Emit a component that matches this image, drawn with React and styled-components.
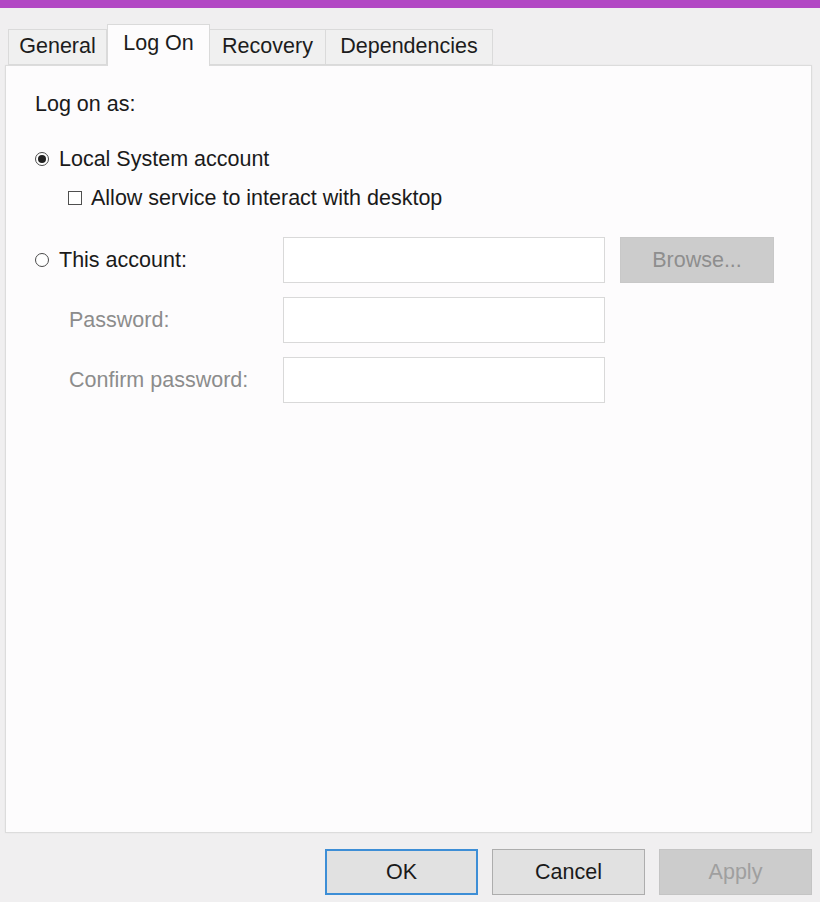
import React, { useState } from 'react';
import styled, { createGlobalStyle } from 'styled-components';

const GlobalStyle = createGlobalStyle`
  html, body {
    margin: 0;
    padding: 0;
    background: #f0eff0;
  }
  body {
    font-family: "Liberation Sans", Arial, sans-serif;
    font-size: 21.5px;
    color: #1a1a1a;
  }
`;

const Window = styled.div`
  width: 820px;
  height: 902px;
  display: flex;
  flex-direction: column;
  background: #f0eff0;
  overflow: hidden;
`;

const TitleStrip = styled.div`
  height: 8px;
  background: #b247c4;
`;

const TabRow = styled.div`
  display: flex;
  align-items: flex-end;
  margin-top: 16px;
  padding-left: 8px;
  height: 41px;
`;

const Tab = styled.div`
  position: relative;
  box-sizing: border-box;
  width: ${({ w }) => w}px;
  height: ${({ active }) => (active ? 42 : 36)}px;
  margin-bottom: ${({ active }) => (active ? -1 : 0)}px;
  display: flex;
  align-items: center;
  justify-content: center;
  padding-bottom: ${({ active }) => (active ? 3 : 0)}px;
  background: ${({ active }) => (active ? '#fdfcfd' : '#f0f0f0')};
  border: 1px solid #dadada;
  border-bottom: ${({ active }) => (active ? 'none' : '1px solid #dadada')};
  border-left: ${({ first, active }) => (first || active ? '1px solid #dadada' : 'none')};
  z-index: ${({ active }) => (active ? 2 : 1)};
  color: #1c1c1c;
  line-height: 1;
`;

const Panel = styled.div`
  box-sizing: border-box;
  margin: 0 8px 0 5px;
  height: 768px;
  background: #fdfcfd;
  border: 1px solid #dcdcdc;
  box-shadow: 0 0 2px rgba(0, 0, 0, 0.05);
  padding: 26px 0 0 29px;
  display: flex;
  flex-direction: column;
`;

const Heading = styled.div`
  line-height: 24px;
`;

const OptionRow = styled.label`
  display: flex;
  align-items: center;
  height: 24px;
  margin-top: ${({ mt }) => mt}px;
  padding-left: ${({ indent }) => indent || 0}px;
  gap: ${({ gap }) => gap}px;
`;

const Radio = styled.span`
  box-sizing: border-box;
  width: 14px;
  height: 14px;
  border-radius: 50%;
  border: 1px solid #4a4a4a;
  background: #fff;
  display: flex;
  align-items: center;
  justify-content: center;
  flex-shrink: 0;
  &::after {
    content: '';
    width: 8px;
    height: 8px;
    border-radius: 50%;
    background: ${({ checked }) => (checked ? '#222' : 'transparent')};
  }
`;

const Check = styled.span`
  box-sizing: border-box;
  width: 14px;
  height: 14px;
  border: 1px solid #4f4f4f;
  background: #fff;
  flex-shrink: 0;
`;

const AccountGrid = styled.div`
  display: grid;
  grid-template-columns: 233px 322px 154px;
  grid-auto-rows: 46px;
  column-gap: 15px;
  row-gap: 14px;
  margin-top: 27px;
  align-items: center;
`;

const FieldLabel = styled.div`
  display: flex;
  align-items: center;
  gap: 10px;
  padding-left: ${({ indent }) => indent || 0}px;
  color: ${({ disabled }) => (disabled ? '#8c8c8c' : '#1a1a1a')};
`;

const TextBox = styled.input`
  box-sizing: border-box;
  width: 100%;
  height: 46px;
  border: 1px solid #d9d9d9;
  background: #fff;
  outline: none;
  margin: 0;
  padding: 0 6px;
  font: inherit;
`;

const GreyButton = styled.button`
  box-sizing: border-box;
  height: 46px;
  width: 154px;
  border: 1px solid #c8c8c8;
  background: #cccccc;
  color: #8e8e8e;
  font: inherit;
  padding: 0;
  margin: 0;
`;

const Footer = styled.div`
  display: flex;
  justify-content: flex-end;
  gap: 14px;
  padding: 16px 8px 0 0;
`;

const DialogButton = styled.button`
  box-sizing: border-box;
  width: 153px;
  height: 46px;
  margin: 0;
  padding: 0;
  font: inherit;
  background: ${({ disabled }) => (disabled ? '#cccccc' : '#e1e1e1')};
  color: ${({ disabled }) => (disabled ? '#9f9f9f' : '#1a1a1a')};
  border: ${({ primary, disabled }) =>
    primary ? '2px solid #3d8ed6' : disabled ? '1px solid #c4c4c4' : '1px solid #adadad'};
`;

const tabs = [
  { label: 'General', w: 99 },
  { label: 'Log On', w: 103 },
  { label: 'Recovery', w: 116 },
  { label: 'Dependencies', w: 167 },
];

const App = () => {
  const [activeTab] = useState('Log On');

  return (
    <Window>
      <GlobalStyle />
      <TitleStrip />
      <TabRow>
        {tabs.map((t, i) => (
          <Tab key={t.label} w={t.w} first={i === 0} active={t.label === activeTab}>
            {t.label}
          </Tab>
        ))}
      </TabRow>
      <Panel>
        <Heading>Log on as:</Heading>
        <OptionRow mt={31} gap={10}>
          <Radio checked />
          Local System account
        </OptionRow>
        <OptionRow mt={15} gap={9} indent={33}>
          <Check />
          Allow service to interact with desktop
        </OptionRow>
        <AccountGrid>
          <FieldLabel>
            <Radio />
            This account:
          </FieldLabel>
          <TextBox />
          <GreyButton disabled>Browse...</GreyButton>

          <FieldLabel indent={34} disabled>Password:</FieldLabel>
          <TextBox type="password" />
          <div />

          <FieldLabel indent={34} disabled>Confirm password:</FieldLabel>
          <TextBox type="password" />
          <div />
        </AccountGrid>
      </Panel>
      <Footer>
        <DialogButton primary>OK</DialogButton>
        <DialogButton>Cancel</DialogButton>
        <DialogButton disabled>Apply</DialogButton>
      </Footer>
    </Window>
  );
};

export default App;
